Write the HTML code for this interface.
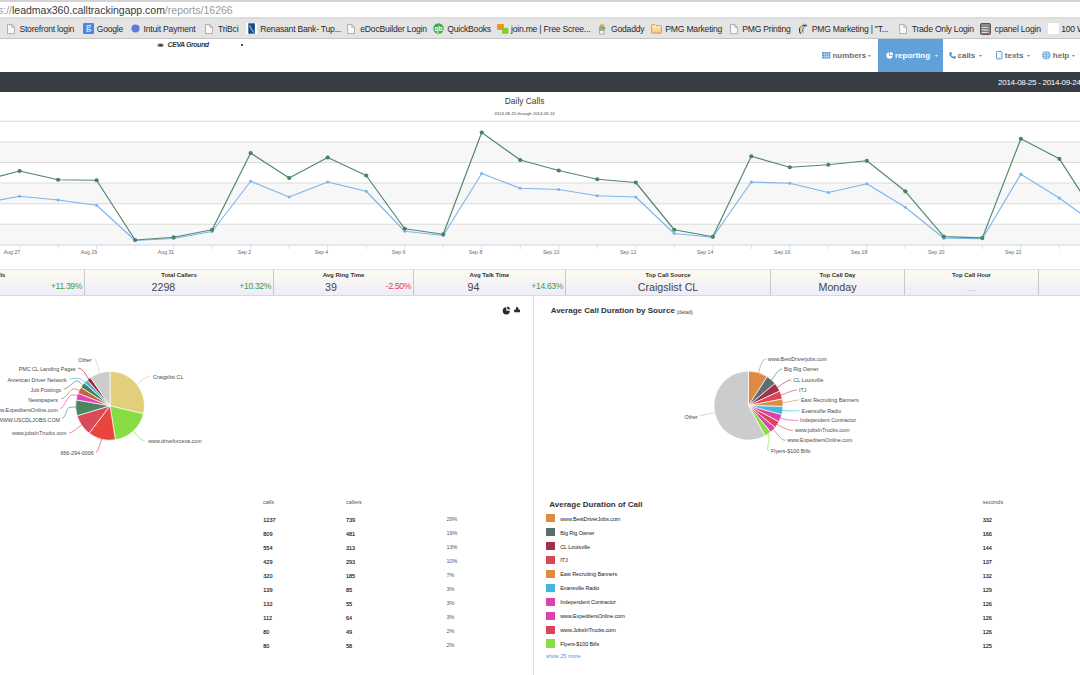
<!DOCTYPE html>
<html><head><meta charset="utf-8"><title>Reports</title>
<style>
html,body{margin:0;padding:0;background:#fff;}
body{width:1080px;height:675px;overflow:hidden;position:relative;font-family:"Liberation Sans", sans-serif;}
.t{position:absolute;white-space:nowrap;font-family:"Liberation Sans", sans-serif;}
.r{position:absolute;}
svg.r{overflow:visible;}
</style></head><body>
<div class="r" style="left:0px;top:0px;width:1080px;height:2px;background:#d4d4d4;"></div>
<div class="r" style="left:0px;top:2px;width:1080px;height:15px;background:#ffffff;"></div>
<div class="r" style="left:0px;top:17px;width:1080px;height:2px;background:#dcdcdc;"></div>
<div class="r" style="left:0px;top:19px;width:1080px;height:19px;background:#e4e4e4;"></div>
<div class="r" style="left:0px;top:38px;width:1080px;height:1px;background:#c4c4c4;"></div>
<div class="t" style="left:-2px;top:5.11px;font-size:10.5px;line-height:10.5px;color:#383838;"><span style="color:#9a9a9a">s://</span>leadmax360.calltrackingapp.com<span style="color:#9a9a9a">/reports/16266</span></div>
<svg class="r" style="left:5.7px;top:23.5px" width="10" height="11" viewBox="0 0 10 11"><path d="M1.5 0.5 H5.8 L8.5 3.2 V9.6 H1.5 Z" fill="#f8f8f8" stroke="#a8a8a8" stroke-width="0.9" stroke-linejoin="round"/><path d="M5.8 0.5 V3.2 H8.5" fill="none" stroke="#a8a8a8" stroke-width="0.9"/></svg>
<div class="t" style="left:19.40px;top:24.52px;font-size:8.6px;line-height:8.6px;color:#2a2a2a;font-weight:normal;font-style:normal;letter-spacing:-0.22px;">Storefront login</div>
<svg class="r" style="left:83px;top:23px" width="11" height="11" viewBox="0 0 11 11"><rect x="0" y="0" width="11" height="11" rx="1" fill="#4a86e8"/><text x="5.5" y="7.4" font-size="11" text-anchor="middle" fill="#fff" font-family="Liberation Serif">g</text></svg>
<div class="t" style="left:96.70px;top:24.52px;font-size:8.6px;line-height:8.6px;color:#2a2a2a;font-weight:normal;font-style:normal;letter-spacing:-0.22px;">Google</div>
<svg class="r" style="left:131px;top:24px" width="9" height="9" viewBox="0 0 9 9"><circle cx="4.5" cy="4.5" r="4.1" fill="#5b7bd6"/></svg>
<div class="t" style="left:143.60px;top:24.52px;font-size:8.6px;line-height:8.6px;color:#2a2a2a;font-weight:normal;font-style:normal;letter-spacing:-0.22px;">Intuit Payment</div>
<svg class="r" style="left:204.29999999999998px;top:23.5px" width="10" height="11" viewBox="0 0 10 11"><path d="M1.5 0.5 H5.8 L8.5 3.2 V9.6 H1.5 Z" fill="#f8f8f8" stroke="#a8a8a8" stroke-width="0.9" stroke-linejoin="round"/><path d="M5.8 0.5 V3.2 H8.5" fill="none" stroke="#a8a8a8" stroke-width="0.9"/></svg>
<div class="t" style="left:218.00px;top:24.52px;font-size:8.6px;line-height:8.6px;color:#2a2a2a;font-weight:normal;font-style:normal;letter-spacing:-0.22px;">TriBci</div>
<svg class="r" style="left:246px;top:23px" width="11" height="11" viewBox="0 0 11 11"><rect width="11" height="11" fill="#ffffff"/><rect x="2.3" y="0.3" width="6.6" height="10.4" fill="#17478c"/><path d="M3.5 2.2 C4 5 6 7 7.8 9.5" stroke="#5fb8b8" stroke-width="1.4" fill="none"/></svg>
<div class="t" style="left:260.30px;top:24.52px;font-size:8.6px;line-height:8.6px;color:#2a2a2a;font-weight:normal;font-style:normal;letter-spacing:-0.22px;">Renasant Bank- Tup...</div>
<svg class="r" style="left:345.9px;top:23.5px" width="10" height="11" viewBox="0 0 10 11"><path d="M1.5 0.5 H5.8 L8.5 3.2 V9.6 H1.5 Z" fill="#f8f8f8" stroke="#a8a8a8" stroke-width="0.9" stroke-linejoin="round"/><path d="M5.8 0.5 V3.2 H8.5" fill="none" stroke="#a8a8a8" stroke-width="0.9"/></svg>
<div class="t" style="left:360.30px;top:24.52px;font-size:8.6px;line-height:8.6px;color:#2a2a2a;font-weight:normal;font-style:normal;letter-spacing:-0.22px;">eDocBuilder Login</div>
<svg class="r" style="left:432.8px;top:23px" width="11" height="11" viewBox="0 0 11 11"><circle cx="5.5" cy="5.5" r="5.2" fill="#3aad48"/><text x="5.5" y="8" font-size="6.5" font-weight="bold" text-anchor="middle" fill="#fff" font-family="Liberation Sans">qb</text></svg>
<div class="t" style="left:447.20px;top:24.52px;font-size:8.6px;line-height:8.6px;color:#2a2a2a;font-weight:normal;font-style:normal;letter-spacing:-0.22px;">QuickBooks</div>
<svg class="r" style="left:496.7px;top:23px" width="12" height="12" viewBox="0 0 12 12"><rect x="0" y="1" width="7" height="6" rx="1.2" fill="#f5940f"/><rect x="5" y="4.8" width="6.5" height="6" rx="1.2" fill="#86cc2c"/></svg>
<div class="t" style="left:511.00px;top:24.52px;font-size:8.6px;line-height:8.6px;color:#2a2a2a;font-weight:normal;font-style:normal;letter-spacing:-0.22px;">join.me | Free Scree...</div>
<svg class="r" style="left:598px;top:22.5px" width="9" height="12" viewBox="0 0 9 12"><path d="M1.5 3 L2.5 0.5 L3.5 2 L4.5 0.3 L5.2 2.2 L6.5 1 L6 3.5 Z" fill="#f0b050"/><ellipse cx="4" cy="5.5" rx="2.8" ry="2.3" fill="#b8b8b0" stroke="#707068" stroke-width="0.6"/><path d="M2.5 5.2 H6.8" stroke="#58a040" stroke-width="1.2"/><path d="M1.5 7.5 H6 V11 H1.5 Z" fill="#f4f4f4" stroke="#909090" stroke-width="0.7"/></svg>
<div class="t" style="left:611.00px;top:24.52px;font-size:8.6px;line-height:8.6px;color:#2a2a2a;font-weight:normal;font-style:normal;letter-spacing:-0.22px;">Godaddy</div>
<svg class="r" style="left:651px;top:23.8px" width="11" height="10" viewBox="0 0 11 10"><defs><linearGradient id="fg" x1="0" y1="0" x2="0" y2="1"><stop offset="0" stop-color="#fff0c0"/><stop offset="1" stop-color="#f5c870"/></linearGradient></defs><path d="M0.6 1.2 Q0.6 0.6 1.2 0.6 H4 L5 1.6 H9.8 Q10.4 1.6 10.4 2.2 V8.6 Q10.4 9.2 9.8 9.2 H1.2 Q0.6 9.2 0.6 8.6 Z" fill="url(#fg)" stroke="#c09050" stroke-width="0.8"/></svg>
<div class="t" style="left:665.30px;top:24.52px;font-size:8.6px;line-height:8.6px;color:#2a2a2a;font-weight:normal;font-style:normal;letter-spacing:-0.22px;">PMG Marketing</div>
<svg class="r" style="left:728.7px;top:23.5px" width="10" height="11" viewBox="0 0 10 11"><path d="M1.5 0.5 H5.8 L8.5 3.2 V9.6 H1.5 Z" fill="#f8f8f8" stroke="#a8a8a8" stroke-width="0.9" stroke-linejoin="round"/><path d="M5.8 0.5 V3.2 H8.5" fill="none" stroke="#a8a8a8" stroke-width="0.9"/></svg>
<div class="t" style="left:742.20px;top:24.52px;font-size:8.6px;line-height:8.6px;color:#2a2a2a;font-weight:normal;font-style:normal;letter-spacing:-0.22px;">PMG Printing</div>
<svg class="r" style="left:797px;top:22px" width="12" height="13" viewBox="0 0 12 13"><path d="M9.4 3.3 C4 2.5 0.8 7 3.6 11.6" stroke="#2a3a80" stroke-width="1.3" fill="none"/><path d="M7.2 1.3 C3.5 3 2.6 8 5 11.3" stroke="#e8d040" stroke-width="1.2" fill="none"/><path d="M10.2 3.6 C6.5 3.5 5.2 7 6 10.5" stroke="#3a4a90" stroke-width="0.9" fill="none"/></svg>
<div class="t" style="left:811.70px;top:24.52px;font-size:8.6px;line-height:8.6px;color:#2a2a2a;font-weight:normal;font-style:normal;letter-spacing:-0.22px;">PMG Marketing | &quot;T...</div>
<svg class="r" style="left:898.1px;top:23.5px" width="10" height="11" viewBox="0 0 10 11"><path d="M1.5 0.5 H5.8 L8.5 3.2 V9.6 H1.5 Z" fill="#f8f8f8" stroke="#a8a8a8" stroke-width="0.9" stroke-linejoin="round"/><path d="M5.8 0.5 V3.2 H8.5" fill="none" stroke="#a8a8a8" stroke-width="0.9"/></svg>
<div class="t" style="left:911.70px;top:24.52px;font-size:8.6px;line-height:8.6px;color:#2a2a2a;font-weight:normal;font-style:normal;letter-spacing:-0.22px;">Trade Only Login</div>
<svg class="r" style="left:980.3px;top:23px" width="11" height="12" viewBox="0 0 11 12"><rect x="0.5" y="0.5" width="10" height="11" rx="1.2" fill="#6a6a6a" stroke="#444" stroke-width="0.8"/><rect x="1.5" y="1.5" width="8" height="1.2" fill="#9ab"/><rect x="1.5" y="3.8" width="8" height="1.4" fill="#d8d8d8"/><rect x="1.5" y="6.3" width="8" height="1.4" fill="#d8d8d8"/><rect x="1.5" y="8.8" width="8" height="1.4" fill="#d8d8d8"/><rect x="7.8" y="4.1" width="1.2" height="0.8" fill="#e05a3a"/><rect x="7.8" y="6.6" width="1.2" height="0.8" fill="#e05a3a"/><rect x="7.8" y="9.1" width="1.2" height="0.8" fill="#e05a3a"/></svg>
<div class="t" style="left:994.60px;top:24.52px;font-size:8.6px;line-height:8.6px;color:#2a2a2a;font-weight:normal;font-style:normal;letter-spacing:-0.22px;">cpanel Login</div>
<div class="r" style="left:1047.8px;top:23px;width:11px;height:11px;background:#ffffff;"></div>
<div class="t" style="left:1061.25px;top:24.52px;font-size:8.6px;line-height:8.6px;color:#2a2a2a;font-weight:normal;font-style:normal;letter-spacing:-0.22px;">100 W</div>
<div class="r" style="left:878px;top:39px;width:65px;height:33px;background:#5fa1d8;"></div>
<svg class="r" style="left:156.5px;top:42.5px" width="7" height="4.5" viewBox="0 0 7 4.5"><ellipse cx="3.5" cy="2.2" rx="3.3" ry="1.9" fill="#999"/><ellipse cx="3.7" cy="2.2" rx="1.8" ry="1.2" fill="#444"/></svg>
<div class="t" style="left:167.60px;top:41.47px;font-size:7px;line-height:7px;color:#3a3a3a;font-weight:bold;font-style:italic;letter-spacing:-0.45px;">CEVA Ground</div>
<div class="r" style="left:241px;top:44.2px;width:2px;height:2px;background:#555;"></div>
<svg class="r" style="left:822px;top:51.7px" width="8.4" height="6.5" viewBox="0 0 8.4 6.5"><rect width="8.4" height="6.5" fill="#5f9bd8"/><g fill="#dfeaf6"><rect x="0" y="1.9" width="8.4" height="0.5"/><rect x="0" y="4.1" width="8.4" height="0.5"/><rect x="2" y="0" width="0.45" height="6.5"/><rect x="4.1" y="0" width="0.45" height="6.5"/><rect x="6.2" y="0" width="0.45" height="6.5"/></g></svg>
<div class="t" style="left:832.40px;top:51.93px;font-size:8px;line-height:8px;color:#6e6e6e;font-weight:bold;font-style:normal;">numbers</div>
<svg class="r" style="left:868.3px;top:55px" width="3" height="2" viewBox="0 0 3 2"><path d="M0 0 H3 L1.5 2 Z" fill="#888"/></svg>
<svg class="r" style="left:885.5px;top:51.5px" width="7" height="7" viewBox="0 0 7 7"><path d="M3.2 0.3 A3.2 3.2 0 1 0 6.7 3.8 H3.2 Z" fill="#fff"/><path d="M4 0 A3 3 0 0 1 7 3 H4 Z" fill="#fff"/></svg>
<div class="t" style="left:895.00px;top:51.93px;font-size:8px;line-height:8px;color:#ffffff;font-weight:bold;font-style:normal;">reporting</div>
<svg class="r" style="left:934.5px;top:55px" width="3" height="2" viewBox="0 0 3 2"><path d="M0 0 H3 L1.5 2 Z" fill="#dfeaf5"/></svg>
<svg class="r" style="left:949px;top:51.5px" width="7" height="7" viewBox="0 0 7 7"><path d="M1.2 0.3 L2.4 0.2 L3 2 L2.2 2.8 C2.7 3.9 3.2 4.4 4.2 4.8 L5 4 L6.8 4.6 L6.7 5.8 C6.5 6.6 5.8 6.9 5 6.7 C2.5 6 0.9 4.3 0.3 1.9 C0.1 1.1 0.5 0.5 1.2 0.3 Z" fill="#4a90d0"/></svg>
<div class="t" style="left:957.50px;top:51.93px;font-size:8px;line-height:8px;color:#6e6e6e;font-weight:bold;font-style:normal;">calls</div>
<svg class="r" style="left:978.5px;top:55px" width="3" height="2" viewBox="0 0 3 2"><path d="M0 0 H3 L1.5 2 Z" fill="#888"/></svg>
<svg class="r" style="left:995.6px;top:51.2px" width="6.5" height="8.5" viewBox="0 0 6.5 8.5"><rect x="0.5" y="0.5" width="5.4" height="7.5" rx="0.9" fill="#fff" stroke="#5b9bd5" stroke-width="1"/><rect x="2.4" y="6.6" width="1.6" height="0.6" fill="#5b9bd5"/></svg>
<div class="t" style="left:1004.80px;top:51.93px;font-size:8px;line-height:8px;color:#6e6e6e;font-weight:bold;font-style:normal;">texts</div>
<svg class="r" style="left:1026.5px;top:55px" width="3" height="2" viewBox="0 0 3 2"><path d="M0 0 H3 L1.5 2 Z" fill="#888"/></svg>
<svg class="r" style="left:1042.3px;top:50.8px" width="8.6" height="8.6" viewBox="0 0 8.6 8.6"><circle cx="4.3" cy="4.3" r="4.1" fill="#5b9bd5"/><ellipse cx="4.3" cy="4.3" rx="1.7" ry="4" fill="none" stroke="#e8f0fa" stroke-width="0.7"/><path d="M0.3 4.3 H8.3 M1 2.3 H7.6 M1 6.3 H7.6" stroke="#e8f0fa" stroke-width="0.6"/></svg>
<div class="t" style="left:1052.80px;top:51.93px;font-size:8px;line-height:8px;color:#6e6e6e;font-weight:bold;font-style:normal;">help</div>
<svg class="r" style="left:1072px;top:55px" width="3" height="2" viewBox="0 0 3 2"><path d="M0 0 H3 L1.5 2 Z" fill="#888"/></svg>
<div class="r" style="left:0px;top:72px;width:1080px;height:20px;background:#373d43;"></div>
<div class="t" style="left:1080.60px;top:79.13px;font-size:8px;line-height:8px;color:#ffffff;font-weight:normal;font-style:normal;transform:translateX(-100%);letter-spacing:-0.28px;">2014-08-25 - 2014-09-24</div>
<div class="t" style="left:524.60px;top:97.14px;font-size:8.4px;line-height:8.4px;color:#3a3a3a;font-weight:normal;font-style:normal;transform:translateX(-50%);">Daily Calls</div>
<div class="t" style="left:524.50px;top:112.40px;font-size:4.25px;line-height:4.25px;color:#444;font-weight:normal;font-style:normal;transform:translateX(-50%);">2014-08-25 through 2014-09-24</div>
<svg class="r" style="left:0;top:0" width="1080" height="270" viewBox="0 0 1080 270"><rect x="0" y="142" width="1080" height="20.5" fill="#f7f7f7"/><rect x="0" y="183" width="1080" height="20.75" fill="#f7f7f7"/><rect x="0" y="224.25" width="1080" height="20.5" fill="#f7f7f7"/><rect x="0" y="120.75" width="1080" height="1" fill="#dcdcdc"/><rect x="0" y="141.5" width="1080" height="1" fill="#dcdcdc"/><rect x="0" y="162.0" width="1080" height="1" fill="#dcdcdc"/><rect x="0" y="182.5" width="1080" height="1" fill="#dcdcdc"/><rect x="0" y="203.25" width="1080" height="1" fill="#dcdcdc"/><rect x="0" y="223.75" width="1080" height="1" fill="#dcdcdc"/><rect x="0" y="244.3" width="1080" height="1.3" fill="#d8dfe8"/><rect x="-19.41" y="245" width="1" height="4" fill="#d8dfe8"/><rect x="19.10" y="245" width="1" height="4" fill="#d8dfe8"/><rect x="57.61" y="245" width="1" height="4" fill="#d8dfe8"/><rect x="96.12" y="245" width="1" height="4" fill="#d8dfe8"/><rect x="134.63" y="245" width="1" height="4" fill="#d8dfe8"/><rect x="173.14" y="245" width="1" height="4" fill="#d8dfe8"/><rect x="211.65" y="245" width="1" height="4" fill="#d8dfe8"/><rect x="250.16" y="245" width="1" height="4" fill="#d8dfe8"/><rect x="288.67" y="245" width="1" height="4" fill="#d8dfe8"/><rect x="327.18" y="245" width="1" height="4" fill="#d8dfe8"/><rect x="365.69" y="245" width="1" height="4" fill="#d8dfe8"/><rect x="404.20" y="245" width="1" height="4" fill="#d8dfe8"/><rect x="442.71" y="245" width="1" height="4" fill="#d8dfe8"/><rect x="481.22" y="245" width="1" height="4" fill="#d8dfe8"/><rect x="519.73" y="245" width="1" height="4" fill="#d8dfe8"/><rect x="558.24" y="245" width="1" height="4" fill="#d8dfe8"/><rect x="596.75" y="245" width="1" height="4" fill="#d8dfe8"/><rect x="635.26" y="245" width="1" height="4" fill="#d8dfe8"/><rect x="673.77" y="245" width="1" height="4" fill="#d8dfe8"/><rect x="712.28" y="245" width="1" height="4" fill="#d8dfe8"/><rect x="750.79" y="245" width="1" height="4" fill="#d8dfe8"/><rect x="789.30" y="245" width="1" height="4" fill="#d8dfe8"/><rect x="827.81" y="245" width="1" height="4" fill="#d8dfe8"/><rect x="866.32" y="245" width="1" height="4" fill="#d8dfe8"/><rect x="904.83" y="245" width="1" height="4" fill="#d8dfe8"/><rect x="943.34" y="245" width="1" height="4" fill="#d8dfe8"/><rect x="981.85" y="245" width="1" height="4" fill="#d8dfe8"/><rect x="1020.36" y="245" width="1" height="4" fill="#d8dfe8"/><rect x="1058.87" y="245" width="1" height="4" fill="#d8dfe8"/><rect x="1097.38" y="245" width="1" height="4" fill="#d8dfe8"/><polyline points="-18.91,203.47 19.60,196.25 58.11,200.00 96.62,205.25 135.13,240.50 173.64,238.50 212.15,231.50 250.66,181.25 289.17,197.00 327.68,182.00 366.19,191.25 404.70,231.25 443.21,235.50 481.72,173.50 520.23,188.25 558.74,189.50 597.25,195.75 635.76,197.00 674.27,233.50 712.78,237.25 751.29,182.00 789.80,183.25 828.31,192.50 866.82,183.75 905.33,207.25 943.84,238.20 982.35,238.70 1020.86,174.20 1059.37,198.00 1097.88,226.00" fill="none" stroke="#7db6ec" stroke-width="1.15" stroke-linejoin="round"/><polyline points="-18.91,181.10 19.60,171.00 58.11,179.75 96.62,180.25 135.13,240.00 173.64,237.25 212.15,229.75 250.66,153.00 289.17,178.00 327.68,157.50 366.19,175.50 404.70,228.75 443.21,234.25 481.72,132.50 520.23,160.00 558.74,170.50 597.25,179.25 635.76,182.50 674.27,229.75 712.78,236.75 751.29,156.25 789.80,167.25 828.31,164.75 866.82,160.75 905.33,191.30 943.84,236.70 982.35,237.90 1020.86,138.80 1059.37,158.80 1097.88,218.50" fill="none" stroke="#52896a" stroke-width="1.2" stroke-linejoin="round"/><circle cx="-18.91" cy="203.47" r="1.6" fill="#7cb5ec"/><circle cx="19.60" cy="196.25" r="1.6" fill="#7cb5ec"/><circle cx="58.11" cy="200.00" r="1.6" fill="#7cb5ec"/><circle cx="96.62" cy="205.25" r="1.6" fill="#7cb5ec"/><circle cx="135.13" cy="240.50" r="1.6" fill="#7cb5ec"/><circle cx="173.64" cy="238.50" r="1.6" fill="#7cb5ec"/><circle cx="212.15" cy="231.50" r="1.6" fill="#7cb5ec"/><circle cx="250.66" cy="181.25" r="1.6" fill="#7cb5ec"/><circle cx="289.17" cy="197.00" r="1.6" fill="#7cb5ec"/><circle cx="327.68" cy="182.00" r="1.6" fill="#7cb5ec"/><circle cx="366.19" cy="191.25" r="1.6" fill="#7cb5ec"/><circle cx="404.70" cy="231.25" r="1.6" fill="#7cb5ec"/><circle cx="443.21" cy="235.50" r="1.6" fill="#7cb5ec"/><circle cx="481.72" cy="173.50" r="1.6" fill="#7cb5ec"/><circle cx="520.23" cy="188.25" r="1.6" fill="#7cb5ec"/><circle cx="558.74" cy="189.50" r="1.6" fill="#7cb5ec"/><circle cx="597.25" cy="195.75" r="1.6" fill="#7cb5ec"/><circle cx="635.76" cy="197.00" r="1.6" fill="#7cb5ec"/><circle cx="674.27" cy="233.50" r="1.6" fill="#7cb5ec"/><circle cx="712.78" cy="237.25" r="1.6" fill="#7cb5ec"/><circle cx="751.29" cy="182.00" r="1.6" fill="#7cb5ec"/><circle cx="789.80" cy="183.25" r="1.6" fill="#7cb5ec"/><circle cx="828.31" cy="192.50" r="1.6" fill="#7cb5ec"/><circle cx="866.82" cy="183.75" r="1.6" fill="#7cb5ec"/><circle cx="905.33" cy="207.25" r="1.6" fill="#7cb5ec"/><circle cx="943.84" cy="238.20" r="1.6" fill="#7cb5ec"/><circle cx="982.35" cy="238.70" r="1.6" fill="#7cb5ec"/><circle cx="1020.86" cy="174.20" r="1.6" fill="#7cb5ec"/><circle cx="1059.37" cy="198.00" r="1.6" fill="#7cb5ec"/><circle cx="1097.88" cy="226.00" r="1.6" fill="#7cb5ec"/><circle cx="-18.91" cy="181.10" r="2.1" fill="#4a8362"/><circle cx="19.60" cy="171.00" r="2.1" fill="#4a8362"/><circle cx="58.11" cy="179.75" r="2.1" fill="#4a8362"/><circle cx="96.62" cy="180.25" r="2.1" fill="#4a8362"/><circle cx="135.13" cy="240.00" r="2.1" fill="#4a8362"/><circle cx="173.64" cy="237.25" r="2.1" fill="#4a8362"/><circle cx="212.15" cy="229.75" r="2.1" fill="#4a8362"/><circle cx="250.66" cy="153.00" r="2.1" fill="#4a8362"/><circle cx="289.17" cy="178.00" r="2.1" fill="#4a8362"/><circle cx="327.68" cy="157.50" r="2.1" fill="#4a8362"/><circle cx="366.19" cy="175.50" r="2.1" fill="#4a8362"/><circle cx="404.70" cy="228.75" r="2.1" fill="#4a8362"/><circle cx="443.21" cy="234.25" r="2.1" fill="#4a8362"/><circle cx="481.72" cy="132.50" r="2.1" fill="#4a8362"/><circle cx="520.23" cy="160.00" r="2.1" fill="#4a8362"/><circle cx="558.74" cy="170.50" r="2.1" fill="#4a8362"/><circle cx="597.25" cy="179.25" r="2.1" fill="#4a8362"/><circle cx="635.76" cy="182.50" r="2.1" fill="#4a8362"/><circle cx="674.27" cy="229.75" r="2.1" fill="#4a8362"/><circle cx="712.78" cy="236.75" r="2.1" fill="#4a8362"/><circle cx="751.29" cy="156.25" r="2.1" fill="#4a8362"/><circle cx="789.80" cy="167.25" r="2.1" fill="#4a8362"/><circle cx="828.31" cy="164.75" r="2.1" fill="#4a8362"/><circle cx="866.82" cy="160.75" r="2.1" fill="#4a8362"/><circle cx="905.33" cy="191.30" r="2.1" fill="#4a8362"/><circle cx="943.84" cy="236.70" r="2.1" fill="#4a8362"/><circle cx="982.35" cy="237.90" r="2.1" fill="#4a8362"/><circle cx="1020.86" cy="138.80" r="2.1" fill="#4a8362"/><circle cx="1059.37" cy="158.80" r="2.1" fill="#4a8362"/><circle cx="1097.88" cy="218.50" r="2.1" fill="#4a8362"/></svg>
<div class="t" style="left:20.20px;top:250.40px;font-size:5.2px;line-height:5.2px;color:#6a6a6a;font-weight:normal;font-style:normal;transform:translateX(-100%);">Aug 27</div>
<div class="t" style="left:97.22px;top:250.40px;font-size:5.2px;line-height:5.2px;color:#6a6a6a;font-weight:normal;font-style:normal;transform:translateX(-100%);">Aug 29</div>
<div class="t" style="left:174.24px;top:250.40px;font-size:5.2px;line-height:5.2px;color:#6a6a6a;font-weight:normal;font-style:normal;transform:translateX(-100%);">Aug 31</div>
<div class="t" style="left:251.26px;top:250.40px;font-size:5.2px;line-height:5.2px;color:#6a6a6a;font-weight:normal;font-style:normal;transform:translateX(-100%);">Sep 2</div>
<div class="t" style="left:328.28px;top:250.40px;font-size:5.2px;line-height:5.2px;color:#6a6a6a;font-weight:normal;font-style:normal;transform:translateX(-100%);">Sep 4</div>
<div class="t" style="left:405.30px;top:250.40px;font-size:5.2px;line-height:5.2px;color:#6a6a6a;font-weight:normal;font-style:normal;transform:translateX(-100%);">Sep 6</div>
<div class="t" style="left:482.32px;top:250.40px;font-size:5.2px;line-height:5.2px;color:#6a6a6a;font-weight:normal;font-style:normal;transform:translateX(-100%);">Sep 8</div>
<div class="t" style="left:559.34px;top:250.40px;font-size:5.2px;line-height:5.2px;color:#6a6a6a;font-weight:normal;font-style:normal;transform:translateX(-100%);">Sep 10</div>
<div class="t" style="left:636.36px;top:250.40px;font-size:5.2px;line-height:5.2px;color:#6a6a6a;font-weight:normal;font-style:normal;transform:translateX(-100%);">Sep 12</div>
<div class="t" style="left:713.38px;top:250.40px;font-size:5.2px;line-height:5.2px;color:#6a6a6a;font-weight:normal;font-style:normal;transform:translateX(-100%);">Sep 14</div>
<div class="t" style="left:790.40px;top:250.40px;font-size:5.2px;line-height:5.2px;color:#6a6a6a;font-weight:normal;font-style:normal;transform:translateX(-100%);">Sep 16</div>
<div class="t" style="left:867.42px;top:250.40px;font-size:5.2px;line-height:5.2px;color:#6a6a6a;font-weight:normal;font-style:normal;transform:translateX(-100%);">Sep 18</div>
<div class="t" style="left:944.44px;top:250.40px;font-size:5.2px;line-height:5.2px;color:#6a6a6a;font-weight:normal;font-style:normal;transform:translateX(-100%);">Sep 20</div>
<div class="t" style="left:1021.46px;top:250.40px;font-size:5.2px;line-height:5.2px;color:#6a6a6a;font-weight:normal;font-style:normal;transform:translateX(-100%);">Sep 22</div>
<div class="t" style="left:1098.48px;top:250.40px;font-size:5.2px;line-height:5.2px;color:#6a6a6a;font-weight:normal;font-style:normal;transform:translateX(-100%);">Sep 24</div>
<div class="r" style="left:0px;top:268.5px;width:1080px;height:1px;background:#e2e2e2;"></div>
<div class="r" style="left:0;top:269.5px;width:1080px;height:25px;background:linear-gradient(#fcfbef,#eeedf9);"></div>
<div class="r" style="left:0px;top:294.5px;width:1080px;height:1px;background:#d8d8e0;"></div>
<div class="r" style="left:84.0px;top:269.5px;width:1px;height:25px;background:#c8c8c8;"></div>
<div class="r" style="left:273.0px;top:269.5px;width:1px;height:25px;background:#c8c8c8;"></div>
<div class="r" style="left:413.0px;top:269.5px;width:1px;height:25px;background:#c8c8c8;"></div>
<div class="r" style="left:565.0px;top:269.5px;width:1px;height:25px;background:#c8c8c8;"></div>
<div class="r" style="left:770.0px;top:269.5px;width:1px;height:25px;background:#c8c8c8;"></div>
<div class="r" style="left:904.0px;top:269.5px;width:1px;height:25px;background:#c8c8c8;"></div>
<div class="r" style="left:1038.0px;top:269.5px;width:1px;height:25px;background:#c8c8c8;"></div>
<div class="t" style="left:-9.50px;top:272.22px;font-size:6px;line-height:6px;color:#333;font-weight:bold;font-style:normal;transform:translateX(-50%);">Total Calls</div>
<div class="t" style="left:82.00px;top:282.40px;font-size:8.5px;line-height:8.5px;color:#3a9a4c;font-weight:normal;font-style:normal;transform:translateX(-100%);letter-spacing:-0.3px;">+11.39%</div>
<div class="t" style="left:179.00px;top:272.22px;font-size:6px;line-height:6px;color:#333;font-weight:bold;font-style:normal;transform:translateX(-50%);">Total Callers</div>
<div class="t" style="left:151.50px;top:282.44px;font-size:10.7px;line-height:10.7px;color:#444;font-weight:normal;font-style:normal;">2298</div>
<div class="t" style="left:271.00px;top:282.40px;font-size:8.5px;line-height:8.5px;color:#3a9a4c;font-weight:normal;font-style:normal;transform:translateX(-100%);letter-spacing:-0.3px;">+10.32%</div>
<div class="t" style="left:343.50px;top:272.22px;font-size:6px;line-height:6px;color:#333;font-weight:bold;font-style:normal;transform:translateX(-50%);">Avg Ring Time</div>
<div class="t" style="left:325.00px;top:282.44px;font-size:10.7px;line-height:10.7px;color:#444;font-weight:normal;font-style:normal;">39</div>
<div class="t" style="left:411.00px;top:282.40px;font-size:8.5px;line-height:8.5px;color:#e8394a;font-weight:normal;font-style:normal;transform:translateX(-100%);letter-spacing:-0.3px;">-2.50%</div>
<div class="t" style="left:489.50px;top:272.22px;font-size:6px;line-height:6px;color:#333;font-weight:bold;font-style:normal;transform:translateX(-50%);">Avg Talk Time</div>
<div class="t" style="left:467.50px;top:282.44px;font-size:10.7px;line-height:10.7px;color:#444;font-weight:normal;font-style:normal;">94</div>
<div class="t" style="left:563.00px;top:282.40px;font-size:8.5px;line-height:8.5px;color:#3a9a4c;font-weight:normal;font-style:normal;transform:translateX(-100%);letter-spacing:-0.3px;">+14.63%</div>
<div class="t" style="left:668.00px;top:272.22px;font-size:6px;line-height:6px;color:#333;font-weight:bold;font-style:normal;transform:translateX(-50%);">Top Call Source</div>
<div class="t" style="left:668.00px;top:282.44px;font-size:10.7px;line-height:10.7px;color:#444;font-weight:normal;font-style:normal;transform:translateX(-50%);">Craigslist CL</div>
<div class="t" style="left:837.50px;top:272.22px;font-size:6px;line-height:6px;color:#333;font-weight:bold;font-style:normal;transform:translateX(-50%);">Top Call Day</div>
<div class="t" style="left:837.50px;top:282.44px;font-size:10.7px;line-height:10.7px;color:#444;font-weight:normal;font-style:normal;transform:translateX(-50%);">Monday</div>
<div class="t" style="left:971.50px;top:272.22px;font-size:6px;line-height:6px;color:#333;font-weight:bold;font-style:normal;transform:translateX(-50%);">Top Call Hour</div>
<div class="t" style="left:971.60px;top:284.95px;font-size:7.5px;line-height:7.5px;color:#777;font-weight:normal;font-style:normal;transform:translateX(-50%);letter-spacing:0.9px;">...</div>
<div class="r" style="left:533px;top:296px;width:1px;height:379px;background:#e6dcd4;"></div>
<svg class="r" style="left:502px;top:305.8px" width="9" height="9" viewBox="0 0 9 9"><path d="M4.3 1.2 A3.6 3.6 0 1 0 7.9 4.8 H4.3 Z" fill="#2a2a2a"/><path d="M5 0.6 C6.5 0.6 7.8 1.6 8.1 3.2 L5.6 3.6 Z" fill="#2a2a2a"/></svg>
<svg class="r" style="left:514px;top:306.8px" width="7" height="6" viewBox="0 0 7 6"><path d="M2 0.3 H4.3 V2.6 H6 V5.3 H0.2 V2.6 H2 Z" fill="#2a2a2a"/></svg>
<div class="t" style="left:550.70px;top:307.43px;font-size:8px;line-height:8px;color:#333;font-weight:bold;font-style:normal;">Average Call Duration by Source</div>
<div class="t" style="left:676.70px;top:309.71px;font-size:5.3px;line-height:5.3px;color:#444;font-weight:normal;font-style:normal;">(detail)</div>
<svg class="r" style="left:0;top:296px" width="533" height="200" viewBox="0 296 533 200"><path d="M110.0,405.8 L110.00,371.40 A34.4,34.4 0 0 1 143.46,413.77 Z" fill="#e2cf7b" stroke="#fff" stroke-width="0.7" stroke-linejoin="round"/><path d="M110.0,405.8 L143.46,413.77 A34.4,34.4 0 0 1 115.37,439.78 Z" fill="#88dd44" stroke="#fff" stroke-width="0.7" stroke-linejoin="round"/><path d="M110.0,405.8 L115.37,439.78 A34.4,34.4 0 0 1 89.14,433.16 Z" fill="#e8453c" stroke="#fff" stroke-width="0.7" stroke-linejoin="round"/><path d="M110.0,405.8 L89.14,433.16 A34.4,34.4 0 0 1 77.07,415.76 Z" fill="#d94a5a" stroke="#fff" stroke-width="0.7" stroke-linejoin="round"/><path d="M110.0,405.8 L77.07,415.76 A34.4,34.4 0 0 1 76.11,399.87 Z" fill="#4d8462" stroke="#fff" stroke-width="0.7" stroke-linejoin="round"/><path d="M110.0,405.8 L76.11,399.87 A34.4,34.4 0 0 1 78.00,393.17 Z" fill="#dd44bb" stroke="#fff" stroke-width="0.7" stroke-linejoin="round"/><path d="M110.0,405.8 L78.00,393.17 A34.4,34.4 0 0 1 81.01,387.28 Z" fill="#c8643c" stroke="#fff" stroke-width="0.7" stroke-linejoin="round"/><path d="M110.0,405.8 L81.01,387.28 A34.4,34.4 0 0 1 84.41,382.81 Z" fill="#3f855a" stroke="#fff" stroke-width="0.7" stroke-linejoin="round"/><path d="M110.0,405.8 L84.41,382.81 A34.4,34.4 0 0 1 87.26,379.99 Z" fill="#4ab3e0" stroke="#fff" stroke-width="0.7" stroke-linejoin="round"/><path d="M110.0,405.8 L87.26,379.99 A34.4,34.4 0 0 1 90.42,377.51 Z" fill="#a02838" stroke="#fff" stroke-width="0.7" stroke-linejoin="round"/><path d="M110.0,405.8 L90.42,377.51 A34.4,34.4 0 0 1 110.00,371.40 Z" fill="#cccccc" stroke="#fff" stroke-width="0.7" stroke-linejoin="round"/><path d="M149.7,376 C145,377 142,380 137.1,384.5" fill="none" stroke="#e2cf7b" stroke-width="0.65"/><path d="M144.5,440.8 C141,440 137,436 133.8,431.2" fill="none" stroke="#88dd44" stroke-width="0.65"/><path d="M96.2,452.7 C99,450 100,443 101.9,438.8" fill="none" stroke="#e8453c" stroke-width="0.65"/><path d="M69.3,433.1 C74,432 77,428 81.5,425" fill="none" stroke="#d94a5a" stroke-width="0.65"/><path d="M61.9,418.4 C66,418 66,409 68.4,408 C71,407 73,407 76.5,407" fill="none" stroke="#4d8462" stroke-width="0.65"/><path d="M60.3,408.7 C64,408 67,397 70.9,395.2 C73,394.5 75,395.2 78,395.6" fill="none" stroke="#dd44bb" stroke-width="0.65"/><path d="M61.1,398.9 C66,398 70,390 73,389 C75,388.6 77,389.5 80,391" fill="none" stroke="#c8643c" stroke-width="0.65"/><path d="M63.6,389.1 C70,388 73,381 77,381 C80,381 81,384 83.5,386" fill="none" stroke="#3f855a" stroke-width="0.65"/><path d="M69.3,379 C76,378 80,378 82,380 C84,382 85,382 86.4,383.4" fill="none" stroke="#4ab3e0" stroke-width="0.65"/><path d="M78.2,368.3 C82,368 85,373 88.8,379.3" fill="none" stroke="#a02838" stroke-width="0.65"/><path d="M93.7,357.8 C96,359 98,366 99.4,372.8" fill="none" stroke="#cccccc" stroke-width="0.65"/></svg>
<div class="t" style="left:153.10px;top:375.47px;font-size:5.35px;line-height:5.35px;color:#4a4a4a;font-weight:normal;font-style:normal;">Craigslist CL</div>
<div class="t" style="left:148.20px;top:439.17px;font-size:5.35px;line-height:5.35px;color:#4a4a4a;font-weight:normal;font-style:normal;">www.driveforceva.com</div>
<div class="t" style="left:93.70px;top:450.77px;font-size:5.35px;line-height:5.35px;color:#4a4a4a;font-weight:normal;font-style:normal;transform:translateX(-100%);">866-294-0006</div>
<div class="t" style="left:66.50px;top:431.17px;font-size:5.35px;line-height:5.35px;color:#4a4a4a;font-weight:normal;font-style:normal;transform:translateX(-100%);">www.jobsInTrucks.com</div>
<div class="t" style="left:60.00px;top:418.17px;font-size:5.35px;line-height:5.35px;color:#4a4a4a;font-weight:normal;font-style:normal;transform:translateX(-100%);">WWW.USCDLJOBS.COM</div>
<div class="t" style="left:57.90px;top:408.37px;font-size:5.35px;line-height:5.35px;color:#4a4a4a;font-weight:normal;font-style:normal;transform:translateX(-100%);">www.ExpeditersOnline.com</div>
<div class="t" style="left:57.90px;top:397.77px;font-size:5.35px;line-height:5.35px;color:#4a4a4a;font-weight:normal;font-style:normal;transform:translateX(-100%);">Newspapers</div>
<div class="t" style="left:61.10px;top:388.07px;font-size:5.35px;line-height:5.35px;color:#4a4a4a;font-weight:normal;font-style:normal;transform:translateX(-100%);">Job Postings</div>
<div class="t" style="left:66.80px;top:377.97px;font-size:5.35px;line-height:5.35px;color:#4a4a4a;font-weight:normal;font-style:normal;transform:translateX(-100%);">American Driver Network</div>
<div class="t" style="left:75.80px;top:367.37px;font-size:5.35px;line-height:5.35px;color:#4a4a4a;font-weight:normal;font-style:normal;transform:translateX(-100%);">PMC CL Landing Pages</div>
<div class="t" style="left:91.60px;top:357.57px;font-size:5.35px;line-height:5.35px;color:#4a4a4a;font-weight:normal;font-style:normal;transform:translateX(-100%);">Other</div>
<svg class="r" style="left:533px;top:296px" width="547" height="200" viewBox="533 296 547 200"><path d="M748.5,405.6 L748.50,371.10 A34.5,34.5 0 0 1 767.24,376.63 Z" fill="#dc8a44" stroke="#fff" stroke-width="0.7" stroke-linejoin="round"/><path d="M748.5,405.6 L767.24,376.63 A34.5,34.5 0 0 1 774.97,383.47 Z" fill="#5d6e72" stroke="#fff" stroke-width="0.7" stroke-linejoin="round"/><path d="M748.5,405.6 L774.97,383.47 A34.5,34.5 0 0 1 779.74,390.97 Z" fill="#a2324a" stroke="#fff" stroke-width="0.7" stroke-linejoin="round"/><path d="M748.5,405.6 L779.74,390.97 A34.5,34.5 0 0 1 782.37,399.02 Z" fill="#dd4458" stroke="#fff" stroke-width="0.7" stroke-linejoin="round"/><path d="M748.5,405.6 L782.37,399.02 A34.5,34.5 0 0 1 782.99,406.44 Z" fill="#e08a42" stroke="#fff" stroke-width="0.7" stroke-linejoin="round"/><path d="M748.5,405.6 L782.99,406.44 A34.5,34.5 0 0 1 781.78,414.70 Z" fill="#44b8dc" stroke="#fff" stroke-width="0.7" stroke-linejoin="round"/><path d="M748.5,405.6 L781.78,414.70 A34.5,34.5 0 0 1 778.96,421.80 Z" fill="#dd44aa" stroke="#fff" stroke-width="0.7" stroke-linejoin="round"/><path d="M748.5,405.6 L778.96,421.80 A34.5,34.5 0 0 1 775.16,427.50 Z" fill="#dd4458" stroke="#fff" stroke-width="0.7" stroke-linejoin="round"/><path d="M748.5,405.6 L775.16,427.50 A34.5,34.5 0 0 1 770.68,432.03 Z" fill="#dd44aa" stroke="#fff" stroke-width="0.7" stroke-linejoin="round"/><path d="M748.5,405.6 L770.68,432.03 A34.5,34.5 0 0 1 765.01,435.89 Z" fill="#88dd44" stroke="#fff" stroke-width="0.7" stroke-linejoin="round"/><path d="M748.5,405.6 L765.01,435.89 A34.5,34.5 0 1 1 748.50,371.10 Z" fill="#cccccc" stroke="#fff" stroke-width="0.7" stroke-linejoin="round"/><path d="M765.8,359.3 C761.8,359.3 760.2,367.1 758.5,372.9" fill="none" stroke="#dc8a44" stroke-width="0.65"/><path d="M782.0,369.1 C778.0,369.1 775.4,375.5 771.4,380.0" fill="none" stroke="#5d6e72" stroke-width="0.65"/><path d="M791.3,380.0 C787.3,380.0 782.6,384.0 777.6,387.2" fill="none" stroke="#a2324a" stroke-width="0.65"/><path d="M796.9,390.0 C792.9,390.0 786.9,393.1 781.2,395.0" fill="none" stroke="#dd4458" stroke-width="0.65"/><path d="M799.0,400.0 C795.0,400.0 788.8,402.2 782.8,402.7" fill="none" stroke="#e08a42" stroke-width="0.65"/><path d="M799.6,410.7 C795.6,410.7 788.5,411.3 782.5,410.4" fill="none" stroke="#44b8dc" stroke-width="0.65"/><path d="M798.0,420.4 C794.0,420.4 786.1,420.3 780.5,418.0" fill="none" stroke="#dd44aa" stroke-width="0.65"/><path d="M793.0,430.4 C789.0,430.4 782.2,427.7 777.2,424.4" fill="none" stroke="#dd4458" stroke-width="0.65"/><path d="M785.3,440.4 C781.3,440.4 777.3,433.6 773.1,429.4" fill="none" stroke="#dd44aa" stroke-width="0.65"/><path d="M769.0,451.0 C765.0,451.0 771.4,438.5 768.1,433.6" fill="none" stroke="#88dd44" stroke-width="0.65"/><path d="M699.5,415.5 C705,415 709,414 714.8,412.5" fill="none" stroke="#cccccc" stroke-width="0.8"/></svg>
<div class="t" style="left:767.80px;top:357.37px;font-size:5.35px;line-height:5.35px;color:#4a4a4a;font-weight:normal;font-style:normal;">www.BestDriverjobs.com</div>
<div class="t" style="left:784.00px;top:367.17px;font-size:5.35px;line-height:5.35px;color:#4a4a4a;font-weight:normal;font-style:normal;">Big Rig Owner</div>
<div class="t" style="left:793.30px;top:378.07px;font-size:5.35px;line-height:5.35px;color:#4a4a4a;font-weight:normal;font-style:normal;">CL Louisville</div>
<div class="t" style="left:798.90px;top:388.07px;font-size:5.35px;line-height:5.35px;color:#4a4a4a;font-weight:normal;font-style:normal;">ITJ</div>
<div class="t" style="left:801.00px;top:398.07px;font-size:5.35px;line-height:5.35px;color:#4a4a4a;font-weight:normal;font-style:normal;">East Recruiting Banners</div>
<div class="t" style="left:801.60px;top:408.77px;font-size:5.35px;line-height:5.35px;color:#4a4a4a;font-weight:normal;font-style:normal;">Evansville Radio</div>
<div class="t" style="left:800.00px;top:418.47px;font-size:5.35px;line-height:5.35px;color:#4a4a4a;font-weight:normal;font-style:normal;">Independent Contractor</div>
<div class="t" style="left:795.00px;top:428.47px;font-size:5.35px;line-height:5.35px;color:#4a4a4a;font-weight:normal;font-style:normal;">www.jobsInTrucks.com</div>
<div class="t" style="left:787.30px;top:438.47px;font-size:5.35px;line-height:5.35px;color:#4a4a4a;font-weight:normal;font-style:normal;">www.ExpeditersOnline.com</div>
<div class="t" style="left:771.00px;top:449.07px;font-size:5.35px;line-height:5.35px;color:#4a4a4a;font-weight:normal;font-style:normal;">Flyers-$100 Bills</div>
<div class="t" style="left:697.80px;top:415.27px;font-size:5.35px;line-height:5.35px;color:#4a4a4a;font-weight:normal;font-style:normal;transform:translateX(-100%);">Other</div>
<div class="t" style="left:263.00px;top:499.64px;font-size:5.5px;line-height:5.5px;color:#555;font-weight:normal;font-style:normal;">calls</div>
<div class="t" style="left:345.90px;top:499.64px;font-size:5.5px;line-height:5.5px;color:#555;font-weight:normal;font-style:normal;">callers</div>
<div class="t" style="left:263.30px;top:517.64px;font-size:5.5px;line-height:5.5px;color:#111;font-weight:normal;font-style:normal;-webkit-text-stroke:0.12px #111;">1237</div>
<div class="t" style="left:345.90px;top:517.64px;font-size:5.5px;line-height:5.5px;color:#111;font-weight:normal;font-style:normal;-webkit-text-stroke:0.12px #111;">739</div>
<div class="t" style="left:446.40px;top:516.74px;font-size:5.5px;line-height:5.5px;color:#555;font-weight:normal;font-style:normal;">29%</div>
<div class="t" style="left:263.30px;top:531.66px;font-size:5.5px;line-height:5.5px;color:#111;font-weight:normal;font-style:normal;-webkit-text-stroke:0.12px #111;">809</div>
<div class="t" style="left:345.90px;top:531.66px;font-size:5.5px;line-height:5.5px;color:#111;font-weight:normal;font-style:normal;-webkit-text-stroke:0.12px #111;">481</div>
<div class="t" style="left:446.40px;top:530.76px;font-size:5.5px;line-height:5.5px;color:#555;font-weight:normal;font-style:normal;">19%</div>
<div class="t" style="left:263.30px;top:545.68px;font-size:5.5px;line-height:5.5px;color:#111;font-weight:normal;font-style:normal;-webkit-text-stroke:0.12px #111;">554</div>
<div class="t" style="left:345.90px;top:545.68px;font-size:5.5px;line-height:5.5px;color:#111;font-weight:normal;font-style:normal;-webkit-text-stroke:0.12px #111;">313</div>
<div class="t" style="left:446.40px;top:544.78px;font-size:5.5px;line-height:5.5px;color:#555;font-weight:normal;font-style:normal;">13%</div>
<div class="t" style="left:263.30px;top:559.70px;font-size:5.5px;line-height:5.5px;color:#111;font-weight:normal;font-style:normal;-webkit-text-stroke:0.12px #111;">429</div>
<div class="t" style="left:345.90px;top:559.70px;font-size:5.5px;line-height:5.5px;color:#111;font-weight:normal;font-style:normal;-webkit-text-stroke:0.12px #111;">293</div>
<div class="t" style="left:446.40px;top:558.80px;font-size:5.5px;line-height:5.5px;color:#555;font-weight:normal;font-style:normal;">10%</div>
<div class="t" style="left:263.30px;top:573.72px;font-size:5.5px;line-height:5.5px;color:#111;font-weight:normal;font-style:normal;-webkit-text-stroke:0.12px #111;">320</div>
<div class="t" style="left:345.90px;top:573.72px;font-size:5.5px;line-height:5.5px;color:#111;font-weight:normal;font-style:normal;-webkit-text-stroke:0.12px #111;">185</div>
<div class="t" style="left:446.40px;top:572.82px;font-size:5.5px;line-height:5.5px;color:#555;font-weight:normal;font-style:normal;">7%</div>
<div class="t" style="left:263.30px;top:587.74px;font-size:5.5px;line-height:5.5px;color:#111;font-weight:normal;font-style:normal;-webkit-text-stroke:0.12px #111;">139</div>
<div class="t" style="left:345.90px;top:587.74px;font-size:5.5px;line-height:5.5px;color:#111;font-weight:normal;font-style:normal;-webkit-text-stroke:0.12px #111;">85</div>
<div class="t" style="left:446.40px;top:586.84px;font-size:5.5px;line-height:5.5px;color:#555;font-weight:normal;font-style:normal;">3%</div>
<div class="t" style="left:263.30px;top:601.76px;font-size:5.5px;line-height:5.5px;color:#111;font-weight:normal;font-style:normal;-webkit-text-stroke:0.12px #111;">132</div>
<div class="t" style="left:345.90px;top:601.76px;font-size:5.5px;line-height:5.5px;color:#111;font-weight:normal;font-style:normal;-webkit-text-stroke:0.12px #111;">55</div>
<div class="t" style="left:446.40px;top:600.86px;font-size:5.5px;line-height:5.5px;color:#555;font-weight:normal;font-style:normal;">3%</div>
<div class="t" style="left:263.30px;top:615.78px;font-size:5.5px;line-height:5.5px;color:#111;font-weight:normal;font-style:normal;-webkit-text-stroke:0.12px #111;">112</div>
<div class="t" style="left:345.90px;top:615.78px;font-size:5.5px;line-height:5.5px;color:#111;font-weight:normal;font-style:normal;-webkit-text-stroke:0.12px #111;">64</div>
<div class="t" style="left:446.40px;top:614.88px;font-size:5.5px;line-height:5.5px;color:#555;font-weight:normal;font-style:normal;">3%</div>
<div class="t" style="left:263.30px;top:629.80px;font-size:5.5px;line-height:5.5px;color:#111;font-weight:normal;font-style:normal;-webkit-text-stroke:0.12px #111;">80</div>
<div class="t" style="left:345.90px;top:629.80px;font-size:5.5px;line-height:5.5px;color:#111;font-weight:normal;font-style:normal;-webkit-text-stroke:0.12px #111;">49</div>
<div class="t" style="left:446.40px;top:628.90px;font-size:5.5px;line-height:5.5px;color:#555;font-weight:normal;font-style:normal;">2%</div>
<div class="t" style="left:263.30px;top:643.82px;font-size:5.5px;line-height:5.5px;color:#111;font-weight:normal;font-style:normal;-webkit-text-stroke:0.12px #111;">80</div>
<div class="t" style="left:345.90px;top:643.82px;font-size:5.5px;line-height:5.5px;color:#111;font-weight:normal;font-style:normal;-webkit-text-stroke:0.12px #111;">58</div>
<div class="t" style="left:446.40px;top:642.92px;font-size:5.5px;line-height:5.5px;color:#555;font-weight:normal;font-style:normal;">2%</div>
<div class="t" style="left:549.30px;top:501.13px;font-size:8px;line-height:8px;color:#333;font-weight:bold;font-style:normal;">Average Duration of Call</div>
<div class="t" style="left:982.70px;top:499.64px;font-size:5.5px;line-height:5.5px;color:#555;font-weight:normal;font-style:normal;">seconds</div>
<div class="r" style="left:545.6px;top:513.9px;width:9.4px;height:8.3px;background:#e08a42;"></div>
<div class="t" style="left:560.20px;top:516.64px;font-size:5.5px;line-height:5.5px;color:#222;font-weight:normal;font-style:normal;letter-spacing:-0.1px;">www.BestDriverJobs.com</div>
<div class="t" style="left:982.70px;top:517.74px;font-size:5.5px;line-height:5.5px;color:#111;font-weight:normal;font-style:normal;-webkit-text-stroke:0.12px #111;">332</div>
<div class="r" style="left:545.6px;top:527.85px;width:9.4px;height:8.3px;background:#5d6e72;"></div>
<div class="t" style="left:560.20px;top:530.59px;font-size:5.5px;line-height:5.5px;color:#222;font-weight:normal;font-style:normal;letter-spacing:-0.1px;">Big Rig Owner</div>
<div class="t" style="left:982.70px;top:531.76px;font-size:5.5px;line-height:5.5px;color:#111;font-weight:normal;font-style:normal;-webkit-text-stroke:0.12px #111;">166</div>
<div class="r" style="left:545.6px;top:541.8px;width:9.4px;height:8.3px;background:#a2324a;"></div>
<div class="t" style="left:560.20px;top:544.54px;font-size:5.5px;line-height:5.5px;color:#222;font-weight:normal;font-style:normal;letter-spacing:-0.1px;">CL Louisville</div>
<div class="t" style="left:982.70px;top:545.78px;font-size:5.5px;line-height:5.5px;color:#111;font-weight:normal;font-style:normal;-webkit-text-stroke:0.12px #111;">144</div>
<div class="r" style="left:545.6px;top:555.75px;width:9.4px;height:8.3px;background:#dd4458;"></div>
<div class="t" style="left:560.20px;top:558.49px;font-size:5.5px;line-height:5.5px;color:#222;font-weight:normal;font-style:normal;letter-spacing:-0.1px;">ITJ</div>
<div class="t" style="left:982.70px;top:559.80px;font-size:5.5px;line-height:5.5px;color:#111;font-weight:normal;font-style:normal;-webkit-text-stroke:0.12px #111;">137</div>
<div class="r" style="left:545.6px;top:569.7px;width:9.4px;height:8.3px;background:#e08a42;"></div>
<div class="t" style="left:560.20px;top:572.44px;font-size:5.5px;line-height:5.5px;color:#222;font-weight:normal;font-style:normal;letter-spacing:-0.1px;">East Recruiting Banners</div>
<div class="t" style="left:982.70px;top:573.82px;font-size:5.5px;line-height:5.5px;color:#111;font-weight:normal;font-style:normal;-webkit-text-stroke:0.12px #111;">132</div>
<div class="r" style="left:545.6px;top:583.65px;width:9.4px;height:8.3px;background:#44b8dc;"></div>
<div class="t" style="left:560.20px;top:586.39px;font-size:5.5px;line-height:5.5px;color:#222;font-weight:normal;font-style:normal;letter-spacing:-0.1px;">Evansville Radio</div>
<div class="t" style="left:982.70px;top:587.84px;font-size:5.5px;line-height:5.5px;color:#111;font-weight:normal;font-style:normal;-webkit-text-stroke:0.12px #111;">129</div>
<div class="r" style="left:545.6px;top:597.6px;width:9.4px;height:8.3px;background:#dd44aa;"></div>
<div class="t" style="left:560.20px;top:600.34px;font-size:5.5px;line-height:5.5px;color:#222;font-weight:normal;font-style:normal;letter-spacing:-0.1px;">Independent Contractor</div>
<div class="t" style="left:982.70px;top:601.86px;font-size:5.5px;line-height:5.5px;color:#111;font-weight:normal;font-style:normal;-webkit-text-stroke:0.12px #111;">126</div>
<div class="r" style="left:545.6px;top:611.55px;width:9.4px;height:8.3px;background:#dd44aa;"></div>
<div class="t" style="left:560.20px;top:614.29px;font-size:5.5px;line-height:5.5px;color:#222;font-weight:normal;font-style:normal;letter-spacing:-0.1px;">www.ExpeditersOnline.com</div>
<div class="t" style="left:982.70px;top:615.88px;font-size:5.5px;line-height:5.5px;color:#111;font-weight:normal;font-style:normal;-webkit-text-stroke:0.12px #111;">126</div>
<div class="r" style="left:545.6px;top:625.5px;width:9.4px;height:8.3px;background:#dd4458;"></div>
<div class="t" style="left:560.20px;top:628.24px;font-size:5.5px;line-height:5.5px;color:#222;font-weight:normal;font-style:normal;letter-spacing:-0.1px;">www.JobsInTrucks.com</div>
<div class="t" style="left:982.70px;top:629.90px;font-size:5.5px;line-height:5.5px;color:#111;font-weight:normal;font-style:normal;-webkit-text-stroke:0.12px #111;">126</div>
<div class="r" style="left:545.6px;top:639.45px;width:9.4px;height:8.3px;background:#88dd44;"></div>
<div class="t" style="left:560.20px;top:642.19px;font-size:5.5px;line-height:5.5px;color:#222;font-weight:normal;font-style:normal;letter-spacing:-0.1px;">Flyers-$100 Bills</div>
<div class="t" style="left:982.70px;top:643.92px;font-size:5.5px;line-height:5.5px;color:#111;font-weight:normal;font-style:normal;-webkit-text-stroke:0.12px #111;">125</div>
<div class="t" style="left:545.90px;top:653.54px;font-size:5.5px;line-height:5.5px;color:#5b8dd6;font-weight:normal;font-style:normal;">show 25 more</div>
</body></html>
